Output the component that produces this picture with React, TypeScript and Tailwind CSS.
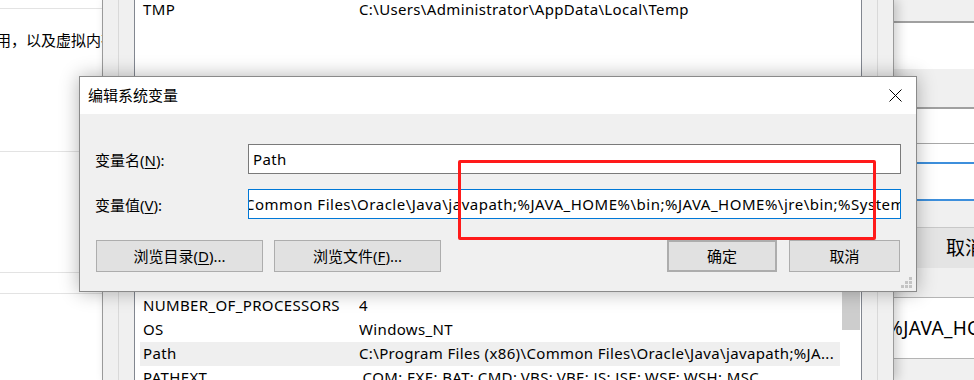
import React from 'react';

interface EnvRow {
  name: string;
  value: string;
  selected?: boolean;
}

const systemRows: EnvRow[] = [
  { name: 'JAVA_HOME', value: 'C:\\Program Files\\Java\\jdk1.8.0_201' },
  { name: 'NUMBER_OF_PROCESSORS', value: '4' },
  { name: 'OS', value: 'Windows_NT' },
  {
    name: 'Path',
    value: 'C:\\Program Files (x86)\\Common Files\\Oracle\\Java\\javapath;%JA...',
    selected: true,
  },
  { name: 'PATHEXT', value: '.COM;.EXE;.BAT;.CMD;.VBS;.VBE;.JS;.JSE;.WSF;.WSH;.MSC' },
];

const FONT = "font-['Noto_Sans','Noto_Sans_CJK_SC',sans-serif]";

// Row of the env var list (name column + value column)
const ListRow: React.FC<{ row: EnvRow }> = ({ row }) => (
  <div
    className={`flex h-[24px] w-[700px] items-center pl-[3px] whitespace-nowrap ${
      row.selected ? 'bg-[#efefef]' : ''
    }`}
  >
    <span className="w-[216px] shrink-0">{row.name}</span>
    <span className="overflow-hidden">{row.value}</span>
  </div>
);

// Label with the mnemonic letter underlined, e.g. 变量名(N):
const Mnemonic: React.FC<{ text: string; letter: string; after: string }> = ({ text, letter, after }) => (
  <span>
    {text}(<span className="underline underline-offset-2">{letter}</span>){after}
  </span>
);

const Button: React.FC<{ className?: string; children: React.ReactNode }> = ({ className = '', children }) => (
  <div
    className={`flex h-[32px] items-center justify-center bg-[#e1e1e1] border border-[#adadad] ${className}`}
  >
    {children}
  </div>
);

const ResizeGrip = () => (
  <svg width="11" height="11" viewBox="0 0 11 11">
    {[
      [8, 0],
      [4, 4],
      [8, 4],
      [0, 8],
      [4, 8],
      [8, 8],
    ].map(([x, y], i) => (
      <rect key={i} x={x} y={y} width="3" height="3" fill="#c4c4c4" />
    ))}
  </svg>
);

export default function App() {
  return (
    <div
      className={`relative flex h-[380px] w-[974px] overflow-hidden bg-white text-[15px] tracking-[0.35px] text-black ${FONT}`}
    >
      {/* left window (system properties) */}
      <div className="flex w-[102px] shrink-0 flex-col bg-white tracking-normal">
        <div className="h-[8px]" />
        <div className="h-[143px] border-t border-[#e3e3e3] pt-[21px] leading-[20px] whitespace-nowrap">
          <span className="-ml-[4px] block">用，以及虚拟内存</span>
        </div>
        <div className="h-[121px] border-t border-[#e3e3e3]" />
        <div className="h-[21px] border-t border-[#e3e3e3]" />
        <div className="flex-1 border-t border-[#e3e3e3]" />
      </div>

      {/* middle window (environment variables) */}
      <div className="relative z-10 flex w-[792px] shrink-0 border-x border-[#9a9a9a] bg-[#f0f0f0] shadow-[4px_0_10px_rgba(0,0,0,0.18)]">
        <div className="flex w-[31px] shrink-0">
          <div className="w-[16px] border-r border-[#d9d9d9]" />
        </div>
        <div className="flex w-[728px] shrink-0 flex-col overflow-hidden border-x border-[#828790] bg-white">
          <div className="-mt-[2px] flex h-[24px] items-center pl-[8px] whitespace-nowrap">
            <span className="w-[216px] shrink-0">TMP</span>
            <span>C:\Users\Administrator\AppData\Local\Temp</span>
          </div>
          <div className="h-[249px] shrink-0" />
          <div className="flex">
            <div className="ml-[5px] flex flex-col">
              {systemRows.map((row) => (
                <ListRow key={row.name} row={row} />
              ))}
            </div>
            <div className="ml-[2px] w-[18px]">
              <div className="h-[60px] bg-[#cdcdcd]" />
            </div>
          </div>
        </div>
        <div className="flex w-[31px] shrink-0">
          <div className="w-[16px] border-r border-[#d9d9d9]" />
        </div>
      </div>

      {/* right window */}
      <div className="flex flex-1 flex-col bg-[#f0f0f0] text-[19px]">
        <div className="h-[21px] shrink-0" />
        <div className="h-[48px] shrink-0 border-t-2 border-[#a0a0a0] bg-white" />
        <div className="h-[38px] shrink-0" />
        <div className="h-[36px] shrink-0 border-t-2 border-[#a0a0a0] bg-white" />
        <div className="h-[19px] shrink-0 border-t border-[#a8a8a8] bg-white" />
        <div className="h-[39px] shrink-0 border-y-2 border-[#3d8fdc] bg-white" />
        <div className="h-[26px] shrink-0" />
        <div className="flex h-[41px] shrink-0 items-center border-t border-[#c8c8c8] bg-[#e4e4e4] pl-[52px] tracking-normal whitespace-nowrap">
          取消
        </div>
        <div className="h-[29px] shrink-0" />
        <div className="flex h-[62px] shrink-0 items-center overflow-hidden border-y border-[#b4b4b4] bg-white whitespace-nowrap">
          <span className="-ml-[7px]">%JAVA_HOME%\bin</span>
        </div>
        <div className="flex-1" />
      </div>

      {/* edit system variable dialog */}
      <div className="absolute left-[79px] top-[76px] z-20 flex h-[216px] w-[838px] flex-col border border-[#8a8a8a] bg-[#f0f0f0] shadow-[0_0_18px_rgba(0,0,0,0.3)]">
        <div className="flex h-[37px] shrink-0 items-center justify-between bg-white pl-[8px] pr-[14px] tracking-normal">
          <span>编辑系统变量</span>
          <svg width="13" height="13" viewBox="0 0 13 13">
            <path d="M0.5 0.5 L12.5 12.5 M12.5 0.5 L0.5 12.5" stroke="#000" strokeWidth="1" />
          </svg>
        </div>
        <div className="flex flex-1 flex-col pt-[30px]">
          <div className="flex h-[30px] items-center pl-[15px] pr-[15px]">
            <div className="w-[153px] shrink-0 pt-[2px] tracking-normal">
              <Mnemonic text="变量名" letter="N" after=":" />
            </div>
            <div className="flex h-[30px] flex-1 items-center border border-[#7a7a7a] bg-white pl-[4px]">
              Path
            </div>
          </div>
          <div className="mt-[15px] flex h-[30px] items-center pl-[15px] pr-[15px]">
            <div className="w-[153px] shrink-0 pt-[2px] tracking-normal">
              <Mnemonic text="变量值" letter="V" after=":" />
            </div>
            <div className="flex h-[30px] flex-1 items-center overflow-hidden border border-[#0078d7] bg-white whitespace-nowrap tracking-[0.5px]">
              <span className="-ml-[4px]">
                Common Files\Oracle\Java\javapath;%JAVA_HOME%\bin;%JAVA_HOME%\jre\bin;%SystemRoot%\system32
              </span>
            </div>
          </div>
          <div className="mt-[21px] flex pl-[16px] pr-[16px] tracking-normal">
            <Button className="w-[167px]">
              <Mnemonic text="浏览目录" letter="D" after="..." />
            </Button>
            <Button className="ml-[11px] w-[167px]">
              <Mnemonic text="浏览文件" letter="F" after="..." />
            </Button>
            <div className="flex-1" />
            <Button className="w-[110px] border-2 border-[#0078d7]">确定</Button>
            <Button className="ml-[12px] w-[111px]">取消</Button>
          </div>
        </div>
        <div className="absolute bottom-[3px] right-[4px]">
          <ResizeGrip />
        </div>
      </div>

      {/* red annotation box */}
      <div className="absolute left-[458px] top-[160px] z-30 h-[80px] w-[418px] rounded-[2px] border-[3px] border-[#ff1a1a]" />
    </div>
  );
}
